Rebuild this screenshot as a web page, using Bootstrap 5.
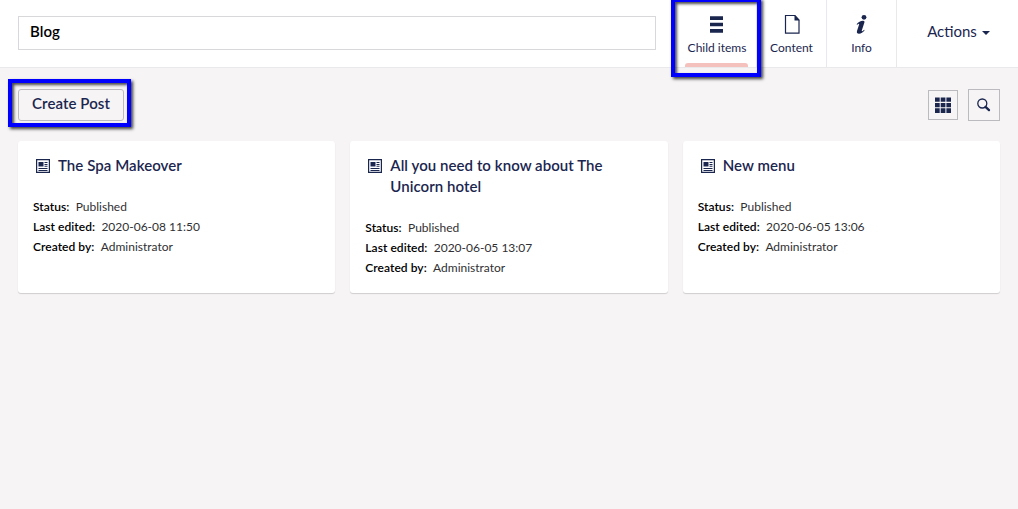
<!DOCTYPE html>
<html lang="en">
<head>
<meta charset="utf-8">
<title>Blog</title>
<link href="https://cdn.jsdelivr.net/npm/bootstrap@5.3.0/dist/css/bootstrap.min.css" rel="stylesheet">
<style>
body{font-family:Lato,"Open Sans",sans-serif;background:#f6f4f5;color:#1b264f;font-size:15px;line-height:20px;min-height:509px;overflow:hidden}
.editor-header{height:68px;border-bottom:1px solid #e9e9eb}
.name-field{width:638px;height:34px;margin:16px 0 0 18px;padding:0 11px 4px;border:1px solid #d8d7d9;border-radius:0;font-size:15px;font-weight:600;letter-spacing:.06px;color:#000}
.tab-item{width:70px;height:67px;border-right:1px solid #e9e9eb;font-size:12px;line-height:16px;padding-top:14px;color:#1b264f;text-decoration:none}
.tab-item svg{display:block;width:22px;height:22px;margin-bottom:4px}
.tab-main{width:81px;margin-left:20px;padding-left:2px}
.tab-main::after{content:"";position:absolute;left:9px;bottom:0;width:63px;height:4px;border-radius:3px 3px 0 0;background:#f5c1bc}
.actions-btn{width:121px;height:67px;padding:0 0 4px 2px;font-size:15px;color:#1b264f}
.actions-btn::after{margin-left:5px;border-top-width:4px;border-left-width:4px;border-right-width:4px;vertical-align:2px}
.callout-box{position:absolute;border:4px solid #00f;box-shadow:2px 2px 3px rgba(0,0,0,.75),inset 2px 2px 3px rgba(0,0,0,.7);pointer-events:none;z-index:3}
.callout-tab{left:-5px;top:-2px;width:90px;height:79px}
.callout-create{left:-10px;top:-10px;width:123px;height:48px}
.toolbar-row{padding:21px 18px 0}
.create-btn{width:106px;height:32px;border:1px solid #bbbabf;border-radius:3px;padding:0 0 4px;font-size:15px;font-weight:600;letter-spacing:.07px;color:#1b264f;background:#f6f4f5}
.tool-btn{width:32px;height:32px;padding:0;border:1px solid #bbbabf;border-radius:0}
.tool-grid{width:30px;height:30px}
.post-grid{display:grid;grid-template-columns:repeat(3,1fr);gap:15px;padding:20px 18px}
.post-card{min-height:152px;background:#fff;border-radius:3px;box-shadow:0 1px 1px rgba(0,0,0,.16);padding:14px 15px;color:#000;font-size:12px}
.post-title{font-size:15px;line-height:21px;font-weight:600;letter-spacing:.06px;color:#1b264f;margin:0 0 21px;padding-left:3px;gap:8px}
.post-title svg{flex:none;margin-top:4px}
.post-card dl{margin:0}
.post-card dt{font-weight:600;letter-spacing:.05px;margin-right:6.3px}
.post-card dd{margin:0;color:#303033}
</style>
</head>
<body>
<svg class="d-none"><symbol id="news" viewBox="0 0 14 14"><path d="M.6.6h12.800v12.800H.6z" fill="none" stroke="#1b264f" stroke-width="1.200"/><path d="M2.500 3h5v4.500h-5zM8.500 3h3v1h-3zM8.500 5h3v1h-3zM8.500 6.700h3v1h-3zM2.500 9h9v1h-9zM2.500 11h9v1h-9z" fill="#1b264f"/></symbol></svg>
<header class="editor-header bg-white d-flex">
  <input class="name-field form-control flex-shrink-0" value="Blog" aria-label="Name">
  <nav class="d-flex">
    <a class="tab-item tab-main position-relative d-flex flex-column align-items-center flex-shrink-0">
      <svg viewBox="0 0 22 22" fill="#1b264f"><path d="M4 2.300h13v3.700H4zM4 8.700h13v3.600H4zM4 15h13v3.700H4z"/></svg>
      <span>Child items</span><span class="callout-box callout-tab"></span>
    </a>
    <a class="tab-item d-flex flex-column align-items-center flex-shrink-0">
      <svg viewBox="0 0 22 22"><path d="M4.500 1.500h9.500l4 4.500v13.200H4.500z" fill="none" stroke="#1b264f" stroke-width="1.200"/><path d="M13.500 1l5 5.500h-5z" fill="#1b264f"/></svg>
      <span>Content</span>
    </a>
    <a class="tab-item d-flex flex-column align-items-center flex-shrink-0">
      <svg viewBox="0 0 22 22" fill="#1b264f"><circle cx="13" cy="3.300" r="2.400"/><path d="M5.600 10.200C7.300 8.200 9.600 7 11.900 6.800c1.400-.1 1.800.7 1.500 1.700l-2.600 8.100c-.2.800.3.800.9.400l1.500-1.300.4.500c-1.600 2.100-3.500 3.600-5.600 3.600-1.800 0-2.500-1.100-2-2.800l2.100-6.400c.3-.9-.1-1-.7-.6l-1.300.8z"/></svg>
      <span>Info</span>
    </a>
  </nav>
  <button class="actions-btn btn dropdown-toggle border-0 flex-shrink-0" type="button">Actions</button>
</header>
<main>
  <div class="toolbar-row d-flex justify-content-between align-items-center">
    <div class="position-relative"><button class="btn create-btn d-block" type="button">Create Post</button><span class="callout-box callout-create"></span></div>
    <div class="d-flex align-items-center" style="gap:10px">
      <button class="btn tool-btn tool-grid d-flex align-items-center justify-content-center" type="button" aria-label="Grid"><svg width="16" height="16" fill="#1b264f"><path d="M0 .5h4.700v4.300H0zM5.700 .5h4.700v4.300H5.700zM11.400 .5H16v4.300h-4.600zM0 5.900h4.700v4.300H0zM5.700 5.900h4.700v4.300H5.700zM11.400 5.900H16v4.300h-4.600zM0 11.300h4.700v4.700H0zM5.700 11.300h4.700v4.700H5.700zM11.400 11.300H16v4.700h-4.600z"/></svg></button>
      <button class="btn tool-btn d-flex align-items-center justify-content-center" type="button" aria-label="Search"><svg width="14" height="14" fill="none" stroke="#1b264f"><circle cx="5.300" cy="5.500" r="4.500" stroke-width="1.300"/><path d="M8.500 8.800l3.500 3.300" stroke-width="2.300" stroke-linecap="round"/></svg></button>
    </div>
  </div>
  <div class="post-grid">
    <article class="post-card">
      <h2 class="post-title d-flex"><svg width="14" height="14"><use href="#news"/></svg><span>The Spa Makeover</span></h2>
      <dl><div class="d-flex"><dt>Status:</dt><dd>Published</dd></div><div class="d-flex"><dt>Last edited:</dt><dd>2020-06-08 11:50</dd></div><div class="d-flex"><dt>Created by:</dt><dd>Administrator</dd></div></dl>
    </article>
    <article class="post-card">
      <h2 class="post-title d-flex"><svg width="14" height="14"><use href="#news"/></svg><span>All you need to know about The Unicorn hotel</span></h2>
      <dl><div class="d-flex"><dt>Status:</dt><dd>Published</dd></div><div class="d-flex"><dt>Last edited:</dt><dd>2020-06-05 13:07</dd></div><div class="d-flex"><dt>Created by:</dt><dd>Administrator</dd></div></dl>
    </article>
    <article class="post-card">
      <h2 class="post-title d-flex"><svg width="14" height="14"><use href="#news"/></svg><span>New menu</span></h2>
      <dl><div class="d-flex"><dt>Status:</dt><dd>Published</dd></div><div class="d-flex"><dt>Last edited:</dt><dd>2020-06-05 13:06</dd></div><div class="d-flex"><dt>Created by:</dt><dd>Administrator</dd></div></dl>
    </article>
  </div>
</main>
<script src="https://cdn.jsdelivr.net/npm/bootstrap@5.3.0/dist/js/bootstrap.bundle.min.js"></script>
</body>
</html>
